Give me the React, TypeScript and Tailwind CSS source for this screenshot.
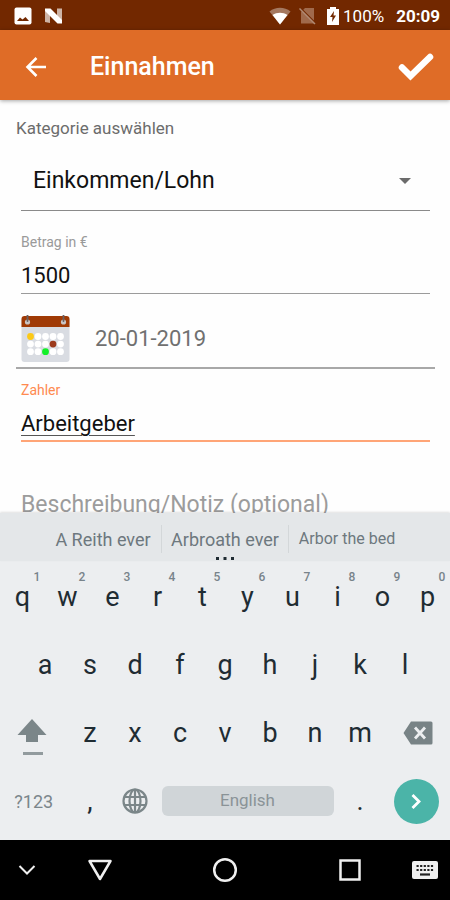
import React, { useState } from 'react';

const topRow = ['q', 'w', 'e', 'r', 't', 'y', 'u', 'i', 'o', 'p'];
const homeRow = ['a', 's', 'd', 'f', 'g', 'h', 'j', 'k', 'l'];
const bottomRow = ['z', 'x', 'c', 'v', 'b', 'n', 'm'];

const calendarDots = [0, 1, 2].flatMap((row) => [0, 1, 2, 3, 4].map((col) => ({ row, col })));

const dotColor = (row: number, col: number) => {
  if (row === 0 && col === 0) return '#fcc916';
  if (row === 1 && col === 3) return '#9c3a1c';
  if (row === 2 && col === 2) return '#12f028';
  return '#ffffff';
};

const CalendarIcon = () => (
  <svg width="50" height="48" viewBox="0 0 50 48" aria-hidden="true">
    <rect x="0.5" y="2" width="48" height="45" rx="3" fill="#d9dce2" />
    <path d="M.5 12V4a3 3 0 0 1 3-3h42a3 3 0 0 1 3 3v8z" fill="#a03a05" />
    <circle cx="6.500" cy="7" r="2.600" fill="#c9c4c4" />
    <circle cx="42.500" cy="7" r="2.600" fill="#c9c4c4" />
    <path d="M6.500 0v6M42.500 0v6" stroke="#6a6060" strokeWidth="1.800" strokeLinecap="round" />
    {calendarDots.map(({ row, col }) => (
      <circle key={`${row}-${col}`} cx={9.5 + col * 7.5} cy={21.5 + row * 7.6} r="3.400" fill={dotColor(row, col)} />
    ))}
  </svg>
);

const StatusBar = () => (
  <div className="flex h-[30px] shrink-0 items-center justify-between bg-[#722800] pt-[2px] pr-[10px] pl-[14px] text-white">
    <div className="flex items-center gap-3">
      <svg width="18" height="18" viewBox="0 0 18 18" aria-hidden="true">
        <rect x="0.5" y="0.5" width="17" height="17" rx="2" fill="#fff" />
        <path d="M3 14l3-3.500 2.500 2L11.500 10 15 14z" fill="#722800" />
      </svg>
      <svg width="19" height="18" viewBox="0 0 19 18" aria-hidden="true">
        <path d="M1 2.500l5 3V16l-5-1zM13 1.500h5V16l-5-4z" fill="#cdb4a6" />
        <path d="M1 1.500h5.500L18 13v3.500h-4.500L1 4z" fill="#fff" />
      </svg>
    </div>
    <div className="flex items-center">
      <svg className="mr-2" width="22" height="18" viewBox="0 0 22 18" aria-hidden="true">
        <path d="M11 17.500L.5 4.500C6.500-.5 15.500-.5 21.500 4.500z" fill="#a47860" />
        <path d="M11 17.500L3.500 8c4.500-3 10.500-3 15 0z" fill="#fff" />
      </svg>
      <svg className="mr-[10px]" width="17" height="18" viewBox="0 0 17 18" aria-hidden="true">
        <path d="M6 1h9v15.500H2V5z" fill="#a06a4c" />
        <path d="M1.500 1L16 15.500" stroke="#722800" strokeWidth="1.500" />
        <path d="M.5 1.500L16 17" stroke="#b08a74" strokeWidth="1.500" />
      </svg>
      <svg className="mr-[3px]" width="14" height="20" viewBox="0 0 14 20" aria-hidden="true">
        <path d="M4 1h6v2h3v16H1V3h3z" fill="#fff" />
        <path d="M8 5L4 11h2.500L6 16l4-6.500H7.500z" fill="#722800" />
      </svg>
      <span className="mr-3 text-[17px] leading-5">100%</span>
      <span className="text-[17px] leading-5 font-bold">20:09</span>
    </div>
  </div>
);

const Header = () => (
  <header className="relative z-10 flex h-[70px] shrink-0 items-center bg-[#df6c27] pt-1 pr-4 pl-6 text-white shadow-[0_1px_4px_rgba(0,0,0,0.35)]">
    <button type="button" aria-label="Zurück" className="flex h-6 w-6 items-center justify-center">
      <svg width="22" height="20" viewBox="0 0 22 20" fill="none" stroke="#fff" strokeWidth="2.600" aria-hidden="true">
        <path d="M21 10H3M11.500 1L2.500 10l9 9" />
      </svg>
    </button>
    <h1 className="ml-[42px] flex-1 text-[25px] leading-8 font-medium">Einnahmen</h1>
    <button type="button" aria-label="Speichern">
      <svg width="36" height="28" viewBox="0 0 36 28" fill="none" stroke="#fff" strokeWidth="6.500" strokeLinecap="round" aria-hidden="true">
        <path d="M4 14.500l8.500 8.500L32 4" strokeLinejoin="miter" />
      </svg>
    </button>
  </header>
);

const EntryForm = () => {
  const [amount, setAmount] = useState('1500');
  const [date, setDate] = useState('20-01-2019');
  const [payer, setPayer] = useState('Arbeitgeber');
  const [note, setNote] = useState('');

  return (
    <main className="min-h-0 flex-1 overflow-hidden bg-[#fefefe] pt-4 pr-[15px] pl-4">
      <form>
        <label htmlFor="category" className="block text-[17px] leading-6 text-[#6c6c6c]">
          Kategorie auswählen
        </label>
        <div className="relative mx-[5px] mt-3">
          <select
            id="category"
            className="h-[59px] w-full appearance-none border-b border-[#8a8a8a] bg-transparent pl-3 text-[23px] text-[#111]"
          >
            <option>Einkommen/Lohn</option>
          </select>
          <svg className="pointer-events-none absolute top-[25px] right-[19px]" width="12" height="8" viewBox="0 0 12 8" aria-hidden="true">
            <path d="M0 1h12L6 7z" fill="#6b6b6b" />
          </svg>
        </div>

        <div className="mx-[5px] mt-[23px]">
          <label htmlFor="amount" className="block text-[14px] leading-4 text-[#9a9a9a]">
            Betrag in €
          </label>
          <input
            id="amount"
            value={amount}
            onChange={(e) => setAmount(e.target.value)}
            className="mt-2 block h-9 w-full border-b border-[#9b9b9b] text-[22px] text-[#111] outline-none"
          />
        </div>

        <div className="flex h-[75px] items-center border-b-2 border-[#a8a8a8] pt-4 pl-[5px]">
          <CalendarIcon />
          <input
            aria-label="Datum"
            value={date}
            onChange={(e) => setDate(e.target.value)}
            className="ml-6 h-9 min-w-0 flex-1 text-[22px] text-[#707070] outline-none"
          />
        </div>

        <div className="mx-[5px] mt-[13px]">
          <label htmlFor="payer" className="block text-[14px] leading-4 text-[#ff8a50]">
            Zahler
          </label>
          <input
            id="payer"
            value={payer}
            onChange={(e) => setPayer(e.target.value)}
            className="mt-2 block h-9 w-full border-b-2 border-[#ffa577] text-[22px] text-[#111] underline decoration-[#555] decoration-1 underline-offset-4 outline-none"
          />
        </div>

        <div className="mx-[5px] mt-12">
          <input
            aria-label="Beschreibung/Notiz (optional)"
            placeholder="Beschreibung/Notiz (optional)"
            value={note}
            onChange={(e) => setNote(e.target.value)}
            className="block h-[30px] w-full text-[23px] placeholder:text-[#9c9c9c] outline-none"
          />
        </div>
      </form>
    </main>
  );
};

const Key = ({ label, hint }: { label: string; hint?: string }) => (
  <button type="button" className="relative col-span-2 flex items-center justify-center">
    {label}
    {hint && (
      <span className="absolute top-2 right-0 w-4 text-center text-[12px] leading-3 font-medium text-[#78838a]">{hint}</span>
    )}
  </button>
);

const Keyboard = () => (
  <section aria-label="Tastatur" className="relative shrink-0 bg-[#eceef0] pb-[5px] text-[27px] text-[#1f2c33]">
    <div className="relative mb-[2px] flex h-12 items-center justify-center bg-[#e4e7e9] pt-1 text-[18px] text-[#6d787e] shadow-[0_-1px_2px_rgba(0,0,0,0.12)]">
      <button type="button" className="w-[116px] whitespace-nowrap">A Reith ever</button>
      <button type="button" className="h-7 w-32 border-x border-[#d3d7d9] whitespace-nowrap">Arbroath ever</button>
      <button type="button" className="w-[116px] whitespace-nowrap text-[16px]">Arbor the bed</button>
      <svg className="absolute bottom-0 left-1/2 -translate-x-1/2" width="18" height="5" viewBox="0 0 18 5" fill="#1f2c33" aria-hidden="true">
        <rect x="0" y="1" width="3" height="3" />
        <rect x="7.5" y="1" width="3" height="3" />
        <rect x="15" y="1" width="3" height="3" />
      </svg>
    </div>

    <div className="grid h-17 grid-cols-20">
      {topRow.map((letter, index) => (
        <Key key={letter} label={letter} hint={String((index + 1) % 10)} />
      ))}
    </div>

    <div className="grid h-17 grid-cols-20">
      <span />
      {homeRow.map((letter) => (
        <Key key={letter} label={letter} />
      ))}
    </div>

    <div className="grid h-17 grid-cols-20">
      <button type="button" aria-label="Umschalttaste" className="col-span-3 flex items-center justify-center pt-2 pr-1">
        <svg width="30" height="38" viewBox="0 0 30 38" fill="#7b8689" aria-hidden="true">
          <path d="M15 1l14.500 16H21v7H9v-7H.5z" />
          <rect x="6" y="34" width="20" height="3" fill="#929b9e" />
        </svg>
      </button>
      {bottomRow.map((letter) => (
        <Key key={letter} label={letter} />
      ))}
      <button type="button" aria-label="Löschen" className="col-span-3 flex items-center justify-center pl-1">
        <svg width="30" height="24" viewBox="0 0 30 24" aria-hidden="true">
          <path d="M8 .5h20a1.500 1.500 0 0 1 1.500 1.500v20a1.500 1.500 0 0 1-1.500 1.500H8L.5 12z" fill="#788386" />
          <path d="M12 6.500l10 11M22 6.500l-10 11" stroke="#eceef0" strokeWidth="2.800" />
        </svg>
      </button>
    </div>

    <div className="grid h-17 grid-cols-20 items-center">
      <button type="button" className="col-span-3 text-[18px] text-[#7b868b]">?123</button>
      <Key label="," />
      <button type="button" aria-label="Sprache wechseln" className="col-span-2 flex justify-center">
        <svg width="26" height="26" viewBox="0 0 26 26" fill="none" stroke="#7b8689" strokeWidth="2.200" aria-hidden="true">
          <circle cx="13" cy="13" r="11.500" />
          <ellipse cx="13" cy="13" rx="5.500" ry="11.500" />
          <path d="M2.500 9h21M2.500 17h21M13 1.500v23" />
        </svg>
      </button>
      <button type="button" className="col-span-8 mx-1 h-[30px] rounded-md bg-[#d0d5d8] text-[17px] text-[#8a9397]">English</button>
      <Key label="." />
      <button type="button" aria-label="Weiter" className="col-span-3 flex justify-center">
        <svg width="45" height="45" viewBox="0 0 45 45" aria-hidden="true">
          <circle cx="22.500" cy="22.500" r="22.500" fill="#4bb4a8" />
          <path d="M18.500 16l6.500 6.500-6.500 6.500" fill="none" stroke="#fff" strokeWidth="2.800" />
        </svg>
      </button>
    </div>
  </section>
);

const NavigationBar = () => (
  <nav className="grid h-[60px] shrink-0 grid-cols-[50px_1fr_1fr_1fr_50px] items-center bg-black">
    <button type="button" aria-label="Tastatur ausblenden" className="flex justify-center pl-1">
      <svg width="18" height="12" viewBox="0 0 18 12" fill="none" stroke="#f0f0f0" strokeWidth="2" aria-hidden="true">
        <path d="M1.500 2L9 9.500 16.500 2" />
      </svg>
    </button>
    <button type="button" aria-label="Zurück" className="flex justify-center pr-4">
      <svg width="26" height="24" viewBox="0 0 26 24" fill="none" stroke="#f0f0f0" strokeWidth="2.500" strokeLinejoin="round" aria-hidden="true">
        <path d="M2.500 3h21L13 21z" />
      </svg>
    </button>
    <button type="button" aria-label="Startseite" className="flex justify-center">
      <svg width="26" height="26" viewBox="0 0 26 26" fill="none" stroke="#f0f0f0" strokeWidth="2.500" aria-hidden="true">
        <circle cx="13" cy="13" r="10.800" />
      </svg>
    </button>
    <button type="button" aria-label="Übersicht" className="flex justify-center pl-4">
      <svg width="22" height="22" viewBox="0 0 22 22" fill="none" stroke="#f0f0f0" strokeWidth="2.500" aria-hidden="true">
        <rect x="1.500" y="1.500" width="19" height="19" />
      </svg>
    </button>
    <button type="button" aria-label="Tastatur wählen" className="flex justify-center">
      <svg width="26" height="18" viewBox="0 0 26 18" aria-hidden="true">
        <rect width="26" height="18" rx="2" fill="#f0f0f0" />
        <path d="M4.500 5h17M4.500 9h17" stroke="#222" strokeWidth="2.200" strokeDasharray="2.200 1.400" />
        <path d="M8 13.500h10" stroke="#222" strokeWidth="2.200" />
      </svg>
    </button>
  </nav>
);

const App = () => {
  return (
    <div className="flex h-screen flex-col bg-white font-['Roboto',sans-serif]">
      <StatusBar />
      <Header />
      <EntryForm />
      <Keyboard />
      <NavigationBar />
    </div>
  );
};

export default App;
